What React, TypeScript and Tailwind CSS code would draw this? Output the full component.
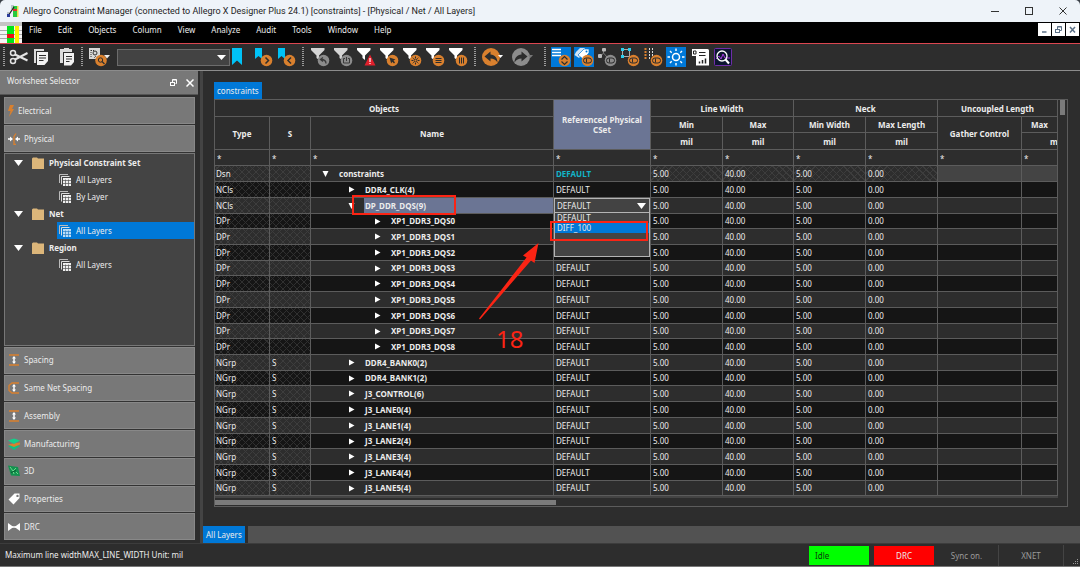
import React from "react";

const ORANGE = "#d9802e";

function Grip() {
  return (
    <svg width="2" height="20" viewBox="0 0 2 20" className="shrink-0" aria-hidden="true">
      <path d="M1 0V20" stroke="#9a9a9a" strokeWidth="2" strokeDasharray="1 1" />
    </svg>
  );
}

function Tool({ label, w = 20, active = false, children }: { label: string; w?: number; active?: boolean; children: React.ReactNode }) {
  return (
    <button type="button" aria-label={label} className={active ? "block shrink-0 bg-[#0078d7]" : "block shrink-0"}>
      <svg width={w} height="20" viewBox={`0 0 ${w} 20`} fill="none">
        {children}
      </svg>
    </button>
  );
}

function Funnel({ color = "#ffffff" }: { color?: string }) {
  return <path d="M1 1H14.5V3L9 8.5V13L6.5 11V8.5L1 3Z" fill={color} />;
}

function Dot({ color = ORANGE, children }: { color?: string; children?: React.ReactNode }) {
  return (
    <>
      <circle cx="13.5" cy="13.5" r="5.8" fill={color} />
      {children}
    </>
  );
}

function Toggle({ color = ORANGE, hole = "#2d2d2d" }: { color?: string; hole?: string }) {
  return (
    <Dot color={color}>
      <rect x="9.5" y="11" width="8" height="5" rx="2.5" stroke={hole} />
      <path d="M12.500 11.500V15.500" stroke={hole} />
    </Dot>
  );
}

function CurvedArrow({ color, flip = false }: { color: string; flip?: boolean }) {
  return (
    <g transform={flip ? "translate(20 0) scale(-1 1)" : undefined}>
      <circle cx="10" cy="10" r="9" fill={color} />
      <path d="M3.500 9.5L9.5 4.500V7.500C14 8 16.500 11 16.500 15.500C14.500 12.500 12.500 11.500 9.500 11.500V14.500Z" fill="#2d2d2d" />
    </g>
  );
}

function Toolbar() {
  return (
    <div role="toolbar" aria-label="Main toolbar" className="flex h-[27px] items-center border-b border-[#8c8c8c] bg-[#2d2d2d] pl-[3px]">
      <Grip />
      <div className="ml-1 flex gap-[2px]">
        <Tool label="Cut">
          <g stroke="#e4e4e4" strokeWidth="1.500">
            <circle cx="4" cy="6" r="2.500" />
            <circle cx="4" cy="14" r="2.500" />
            <path d="M6 7.500L18.500 13.500M6 12.500L18.500 6" strokeWidth="2" />
          </g>
        </Tool>
        <Tool label="Copy">
          <path d="M3 2H13V4H5V16H3Z" fill="#dcdcdc" />
          <path d="M6 5H17V14L13.500 18H6Z" fill="#f2f2f2" />
          <path d="M8 8.500H15M8 11H15M8 13.500H12.500" stroke="#2d2d2d" />
        </Tool>
      </div>
      <div className="ml-[6px] flex">
        <Tool label="Paste">
          <path d="M3 2H7V1H12V2H15V5H6V16H3Z" fill="#dcdcdc" />
          <path d="M7 6H17V15L14 18.500H7Z" fill="#f2f2f2" />
          <path d="M9 9.500H15M9 12H15M9 14.500H12.500" stroke="#2d2d2d" />
        </Tool>
      </div>
      <div className="ml-1 flex items-center gap-[6px]">
        <Grip />
        <Tool label="Find" w={22}>
          <rect x="0" y="1" width="11" height="11" fill="#d8d8d8" />
          <path d="M2 3V11M2 3.500H5M7 9L5 11" stroke="#333" strokeDasharray="1 1" />
          <circle cx="6" cy="6" r="2" stroke="#333" />
          <path d="M15 8H21L18 11.500Z" fill="#eee" />
          <circle cx="12" cy="13.500" r="5.800" fill={ORANGE} />
          <circle cx="11.500" cy="13" r="2.200" stroke="#2d2d2d" />
          <path d="M13 14.500L15.500 17" stroke="#2d2d2d" strokeWidth="1.300" />
        </Tool>
        <span className="relative block h-[17px] w-[113px]">
          <select aria-label="Search text" className="block h-full w-full appearance-none border border-[#6c6c6c] bg-[#434343]">
            <option aria-label="Empty" />
          </select>
          <svg width="9" height="5" viewBox="0 0 9 5" className="pointer-events-none absolute top-[6px] right-1" aria-hidden="true">
            <path d="M0 0H9L4.500 5Z" fill="#fff" />
          </svg>
        </span>
      </div>
      <div className="ml-px flex">
        <Tool label="Bookmark" w={12}>
          <path d="M1 1H11V18L6 13.500L1 18Z" fill="#00c3f7" />
        </Tool>
      </div>
      <div className="ml-[10px] flex gap-[3px]">
        <Tool label="Next bookmark">
          <path d="M2 1H9V12L5.500 9L2 12Z" fill="#00c3f7" />
          <Dot>
            <path d="M12.500 10.500L15.500 13.500L12.500 16.500" stroke="#2d2d2d" strokeWidth="1.500" />
          </Dot>
        </Tool>
        <Tool label="Previous bookmark">
          <path d="M2 1H9V12L5.500 9L2 12Z" fill="#00c3f7" />
          <Dot>
            <path d="M15 10.500L12 13.500L15 16.500" stroke="#2d2d2d" strokeWidth="1.500" />
          </Dot>
        </Tool>
      </div>
      <div className="ml-[6px] flex items-center gap-[6px]">
        <Grip />
        <div className="flex gap-[3px]">
          <Tool label="Undo filter">
            <Funnel color="#d4d4d4" />
            <Dot color="#8c8c8c">
              <path d="M13 10.500L10.500 12.500L13 14.500M11 12.500C14 12.500 16 13.500 16 16.500" stroke="#3a3a3a" strokeWidth="1.300" />
            </Dot>
          </Tool>
          <Tool label="Export filter">
            <Funnel color="#d4d4d4" />
            <Dot color="#8c8c8c">
              <path d="M12 11.500H10.500V16H16.500V11.500H15M13.500 14V10" stroke="#3a3a3a" />
            </Dot>
          </Tool>
          <Tool label="Filter errors">
            <Funnel />
            <path d="M14 7.500L19.500 18.500H8.500Z" fill="#e0202c" />
            <path d="M14 11V15M14 16V17" stroke="#fff" strokeWidth="1.200" />
          </Tool>
          <Tool label="Filter selection">
            <Funnel />
            <Dot>
              <path d="M10.500 10.500L16.500 12.500L14.500 13.500L16 15.500L15 16.500L13.200 14.700L12.200 16.500Z" fill="#2d2d2d" />
            </Dot>
          </Tool>
          <Tool label="Filter highlighted">
            <Funnel />
            <Dot>
              <circle cx="13.500" cy="13.500" r="1.500" stroke="#2d2d2d" />
              <path d="M13.500 9.500V11M13.500 16V17.500M9.500 13.500H11M16 13.500H17.500M10.700 10.700L11.700 11.700M15.300 15.300L16.300 16.300M10.700 16.300L11.700 15.300M15.300 11.700L16.300 10.700" stroke="#2d2d2d" />
            </Dot>
          </Tool>
          <Tool label="Filter rows">
            <Funnel />
            <Dot>
              <path d="M10.500 11.500H16.500M10.500 13.500H16.500M10.500 15.500H16.500" stroke="#2d2d2d" />
            </Dot>
          </Tool>
          <Tool label="Filter columns">
            <Funnel />
            <Dot>
              <path d="M11.500 10.500V16.500M13.500 10.500V16.500M15.500 10.500V16.500" stroke="#2d2d2d" />
            </Dot>
          </Tool>
        </div>
      </div>
      <div className="ml-[6px] flex items-center gap-[5px]">
        <Grip />
        <div className="flex gap-[6px]">
          <Tool label="Undo" w={24}>
            <CurvedArrow color={ORANGE} />
            <path d="M17 8H22L19.500 11Z" fill="#fff" />
          </Tool>
          <Tool label="Redo" w={24}>
            <CurvedArrow color="#8c8c8c" flip />
            <path d="M17 8H22L19.500 11Z" fill="#777" />
          </Tool>
        </div>
      </div>
      <div className="ml-[9px] flex items-center gap-[5px]">
        <Grip />
        <div className="flex gap-[3px]">
          <Tool label="Expand rows" active>
            <path d="M1 2.500H10M1 5.500H10M1 8.500H10" stroke="#fff" strokeWidth="1.500" />
            <Dot>
              <path d="M10.500 12.500L13.500 9.500L16.500 12.500M10.500 14.500L13.500 17.500L16.500 14.500" stroke="#2d2d2d" strokeWidth="1.200" />
            </Dot>
          </Tool>
          <Tool label="Show tags" active>
            <path d="M2 5L6 1H11V5L5 11L0.500 8Z" fill="#cfe4f7" />
            <path d="M4 8L10 2H15V6L9 12Z" fill="#fff" stroke="#0078d7" strokeWidth="0.700" />
            <circle cx="12.500" cy="4.500" r="1" fill="#0078d7" />
            <Toggle />
          </Tool>
          <Tool label="Show hierarchy">
            <path d="M6.500 3V6M3 10L6.500 6L10 10" stroke="#777" />
            <rect x="5" y="1" width="4" height="3.500" rx="1" fill="#bbb" />
            <rect x="1" y="7" width="4" height="4" rx="1" fill="#bbb" />
            <Toggle color="#8c8c8c" />
          </Tool>
          <Tool label="Show outline">
            <rect x="2.500" y="2.500" width="7" height="7" stroke="#aaa" />
            <g fill="#2ad0ef">
              <rect x="1" y="1" width="3" height="3" />
              <rect x="8" y="1" width="3" height="3" />
              <rect x="1" y="8" width="3" height="3" />
            </g>
            <Toggle />
          </Tool>
          <Tool label="Show columns">
            <path d="M2.500 1V12" stroke={ORANGE} strokeWidth="2" strokeDasharray="2 1" />
            <path d="M6.500 1V12M9.500 1V9" stroke="#ddd" strokeDasharray="2 1" />
            <Toggle />
          </Tool>
          <Tool label="Brightness" active>
            <circle cx="10" cy="10" r="3.500" stroke="#fff" strokeWidth="1.500" />
            <path d="M10 1.500V4M10 16V18.500M1.500 10H4M16 10H18.500M4 4L5.700 5.700M14.300 14.300L16 16M4 16L5.700 14.300M14.300 5.700L16 4" stroke="#fff" strokeWidth="1.400" />
          </Tool>
          <Tool label="Report" w={21}>
            <path d="M3 2H18.500A1.500 1.500 0 0 1 20 3.500V18.500H7V9H3Z" fill="#fff" />
            <path d="M4.500 4V7H7V4ZM10 5.500H16.500M10 8.500H16.500" stroke="#222" />
            <path d="M10.500 16.500V14.500M13.500 16.500V13M16.500 16.500V11.500" stroke="#222" strokeWidth="1.500" />
          </Tool>
          <Tool label="Analysis search" w={22}>
            <rect x="1.500" y="1.500" width="17" height="17" rx="1" fill="#0c1530" stroke="#6f2da8" />
            <path d="M3 12L6 9L8 12L10 7L12 11H17" stroke="#a33be0" />
            <circle cx="9" cy="9" r="5" stroke="#fff" strokeWidth="1.300" />
            <path d="M12.500 12.500L16 16.500" stroke="#fff" strokeWidth="2" />
          </Tool>
        </div>
      </div>
    </div>
  );
}

function TitleBar() {
  return (
    <header className="bg-[#3a4048]">
      <div className="flex h-[22px] items-center rounded-t-[5px] bg-[#eef3f9] pr-[13px] pl-[7px] text-[#1d1d1d]">
        <svg width="12" height="14" viewBox="0 0 12 14" aria-hidden="true">
          <path d="M4 1H7V5H4ZM0 8H2V11H0Z" fill="#bcc4cb" />
          <rect x="6" y="2" width="4" height="11" fill="#27c93f" />
          <rect x="6" y="5" width="4" height="2" fill="#e03030" />
          <rect x="10" y="2" width="1.500" height="11" fill="#e8e14a" />
          <path d="M1 12L7 3" stroke="#222" strokeWidth="1.300" />
          <rect x="0" y="10" width="3" height="3" fill="#2a3c9a" />
        </svg>
        <h1 className="ml-1 font-[Roboto,'Noto_Sans',sans-serif] text-[9px] leading-3">
          Allegro Constraint Manager (connected to Allegro X Designer Plus 24.1) [constraints] - [Physical / Net / All Layers]
        </h1>
        <div className="ml-auto flex gap-[26px]">
          <button type="button" aria-label="Minimize">
            <svg width="8" height="8" viewBox="0 0 8 8"><path d="M0 4.500H8" stroke="#333" /></svg>
          </button>
          <button type="button" aria-label="Maximize">
            <svg width="8" height="8" viewBox="0 0 8 8"><rect x="0.500" y="0.500" width="7" height="7" fill="none" stroke="#333" /></svg>
          </button>
          <button type="button" aria-label="Close">
            <svg width="8" height="8" viewBox="0 0 8 8"><path d="M0.500 0.500L7.500 7.500M7.500 0.500L0.500 7.500" stroke="#333" /></svg>
          </button>
        </div>
      </div>
    </header>
  );
}

const MENUS = ["File", "Edit", "Objects", "Column", "View", "Analyze", "Audit", "Tools", "Window", "Help"];

function MenuBar() {
  return (
    <nav aria-label="Menu" className="flex h-[22px] items-start border-b border-[#dc4650] bg-black">
      <svg width="22" height="21" viewBox="0 0 22 21" className="shrink-0" aria-hidden="true">
        <rect width="22" height="21" fill="#f4f4f4" />
        <rect width="22" height="4" fill="#c4c4c4" />
        <path d="M0 8.500H22M0 12.500H22M0 16.500H22" stroke="#aaa" />
        <rect x="7" y="4" width="7" height="17" fill="#00e51a" />
        <rect x="7" y="12" width="7" height="4" fill="#f01010" />
        <rect x="15" y="4" width="4" height="17" fill="#fff200" />
      </svg>
      <div className="ml-[7px] flex gap-4 pt-[2px]">
        {MENUS.map((m) => (
          <button type="button" key={m} className="leading-3">{m}</button>
        ))}
      </div>
      <div className="mt-px mr-px ml-auto flex gap-px">
        <button type="button" aria-label="Minimize worksheet" className="bg-white">
          <svg width="13" height="13" viewBox="0 0 13 13"><path d="M4 9H8.500" stroke="#5a6f86" strokeWidth="1.500" /></svg>
        </button>
        <button type="button" aria-label="Restore worksheet" className="bg-white">
          <svg width="13" height="13" viewBox="0 0 13 13" fill="none" stroke="#5a6f86">
            <path d="M5.500 6V3.500H9.500V7.500H8M5.500 4H9.500" />
            <rect x="3.500" y="6.500" width="4" height="3" />
          </svg>
        </button>
        <button type="button" aria-label="Close worksheet" className="bg-white">
          <svg width="13" height="13" viewBox="0 0 13 13"><path d="M4 4L9 9.500M9 4L4 9.500" stroke="#5a6f86" strokeWidth="1.500" /></svg>
        </button>
      </div>
    </nav>
  );
}

function SpacingIcon({ net = false }: { net?: boolean }) {
  return (
    <svg width="12" height="12" viewBox="0 0 12 12" fill="none">
      {net ? (
        <path d="M11 1H4L1 3.500V8.500L4 11H11" stroke={ORANGE} strokeWidth="1.300" />
      ) : (
        <path d="M1 1H11M1 11H11" stroke={ORANGE} strokeWidth="1.300" />
      )}
      <path d="M6 3V9" stroke="#fff" strokeWidth="1.500" />
      <path d="M6 2L8 4.500H4ZM6 10L8 7.500H4Z" fill="#fff" />
    </svg>
  );
}

const SECTIONS: { label: string; icon: React.ReactNode }[] = [
  { label: "Spacing", icon: <SpacingIcon /> },
  { label: "Same Net Spacing", icon: <SpacingIcon net /> },
  { label: "Assembly", icon: <SpacingIcon /> },
  {
    label: "Manufacturing",
    icon: (
      <svg width="12" height="12" viewBox="0 0 12 12">
        <path d="M0 8L6 6L12 8L6 12Z" fill="#10c080" />
        <path d="M0 6.500L5 5.500L12 4.500V6.500L6 9Z" fill={ORANGE} />
        <path d="M0 2.500L6 0.500L12 2.500L6 6Z" fill="#14cf8a" />
      </svg>
    ),
  },
  {
    label: "3D",
    icon: (
      <svg width="12" height="12" viewBox="0 0 12 12" fill="none">
        <path d="M0 0.500L10 2L12 11L3 10.500Z" fill="#12924f" />
        <path d="M2 2L5 6L8 3M5 6L6 9M8 7L10 9" stroke="#6cd98b" />
        <path d="M3 7.500L8 5.500" stroke="#0a5a33" />
      </svg>
    ),
  },
  {
    label: "Properties",
    icon: (
      <svg width="12" height="12" viewBox="0 0 12 12">
        <path fillRule="evenodd" d="M0.500 6.500L6.500 0.500H11.500V5L5.500 11.500ZM9.500 1.700A1.200 1.200 0 1 0 9.500 4.100A1.200 1.200 0 0 0 9.500 1.700Z" fill="#fff" />
      </svg>
    ),
  },
  {
    label: "DRC",
    icon: (
      <svg width="12" height="12" viewBox="0 0 12 12">
        <path d="M0 2L5.500 6L0 10ZM12 2L6.500 6L12 10Z" fill="#fff" />
        <path d="M4 6H8" stroke="#fff" strokeWidth="1.500" />
      </svg>
    ),
  },
];

function FolderRow({ label }: { label: string }) {
  return (
    <button type="button" className="flex h-[17px] w-full items-center pl-[9px] text-left font-bold">
      <svg width="9" height="6" viewBox="0 0 9 6" aria-hidden="true"><path d="M0 0H9L4.500 6Z" fill="#fff" /></svg>
      <svg width="12" height="12" viewBox="0 0 12 12" className="ml-[9px]" aria-hidden="true">
        <path d="M0 1.500L1 0.500H5L6 1.500H12V12H0Z" fill="#dcb67a" />
      </svg>
      <span className="ml-[5px]">{label}</span>
    </button>
  );
}

function SheetRow({ label, selected = false }: { label: string; selected?: boolean }) {
  return (
    <button type="button" className={`ml-[52px] flex h-[17px] items-center self-stretch pl-[2px] ${selected ? "bg-[#0078d7]" : ""}`}>
      <svg width="12" height="12" viewBox="0 0 12 12" fill="none" aria-hidden="true">
        <path d="M0.500 9V0.500H9" stroke="#bbb" />
        <path d="M2.500 10.500V2.500H10.500" stroke="#ddd" />
        <rect x="4" y="4" width="8" height="8" fill={selected ? "#b9dcf8" : "#f0f0f0"} />
        <path d="M6.500 5.500V12M9.500 5.500V12M4 6.500H12M4 9.500H12" stroke={selected ? "#2b7fc6" : "#555"} strokeWidth="0.700" />
      </svg>
      <span className="ml-[5px]">{label}</span>
    </button>
  );
}

function Sidebar() {
  const bar = "flex items-center border border-[#888] bg-[#787878] pl-[3px] text-left";
  return (
    <aside className="flex w-[203px] shrink-0 border-r-[3px] border-[#444]">
      <div className="flex w-[198px] flex-col">
        <div className="flex h-6 items-center border-b border-[#555] bg-[#787878] pr-1 pl-[7px]">
          <h2 className="-mt-1 flex-1">Worksheet Selector</h2>
          <button type="button" aria-label="Float panel">
            <svg width="8" height="8" viewBox="0 0 8 8" fill="none" stroke="#fff">
              <path d="M2.500 3V0.500H6.500V4.500H5.500M2.500 1H6.500" />
              <rect x="0.500" y="3.500" width="4" height="3" />
            </svg>
          </button>
          <button type="button" aria-label="Close panel" className="ml-2">
            <svg width="8" height="8" viewBox="0 0 8 8"><path d="M0.500 0.500L7.500 7.500M7.500 0.500L0.500 7.500" stroke="#fff" strokeWidth="1.500" /></svg>
          </button>
        </div>
        <div className="mt-[2px] mr-[3px] mb-[3px] ml-1 flex flex-1 flex-col gap-px bg-[#333]">
          <button type="button" className={`${bar} h-[27px]`}>
            <svg width="6" height="12" viewBox="0 0 6 12" aria-hidden="true"><path d="M2 0H6L4 4H6L1 12L2.500 6H0Z" fill={ORANGE} /></svg>
            <span className="ml-1">Electrical</span>
          </button>
          <button type="button" className={`${bar} h-[27px]`}>
            <svg width="12" height="12" viewBox="0 0 12 12" fill="none" aria-hidden="true">
              <path d="M8 0.500L6 3.500V11.500H8M6 3.500V7" stroke={ORANGE} strokeWidth="1.300" />
              <path d="M0 6H2M10 6H12" stroke="#fff" strokeWidth="1.500" />
              <path d="M2 3.500L5 6L2 8.500ZM10 3.500L7 6L10 8.500Z" fill="#fff" />
            </svg>
            <span className="ml-1">Physical</span>
          </button>
          <div className="flex flex-1 flex-col border border-[#777] bg-[#444]">
            <FolderRow label="Physical Constraint Set" />
            <SheetRow label="All Layers" />
            <SheetRow label="By Layer" />
            <FolderRow label="Net" />
            <SheetRow label="All Layers" selected />
            <FolderRow label="Region" />
            <SheetRow label="All Layers" />
          </div>
          <div className="flex h-[193px] flex-col gap-px">
            {SECTIONS.map((s) => (
              <button type="button" key={s.label} className={`${bar} flex-1`}>
                {s.icon}
                <span className="ml-1">{s.label}</span>
              </button>
            ))}
          </div>
        </div>
      </div>
    </aside>
  );
}

type Row = { type: string; s?: string; name: string; level: 0 | 1 | 2; open?: boolean };

const ROWS: Row[] = [
  { type: "Dsn", name: "constraints", level: 0, open: true },
  { type: "NCls", name: "DDR4_CLK(4)", level: 1 },
  { type: "NCls", name: "DP_DDR_DQS(9)", level: 1, open: true },
  ...[0, 1, 2, 3, 4, 5, 6, 7, 8].map((n): Row => ({ type: "DPr", name: `XP1_DDR3_DQS${n}`, level: 2 })),
  ...["DDR4_BANK0(2)", "DDR4_BANK1(2)", "J3_CONTROL(6)", "J3_LANE0(4)", "J3_LANE1(4)", "J3_LANE2(4)", "J3_LANE3(4)", "J3_LANE4(4)", "J3_LANE5(4)"].map(
    (name): Row => ({ type: "NGrp", s: "S", name, level: 1 }),
  ),
];

const INDENT = ["pl-[11px]", "pl-[37px]", "pl-[63px]"];
const HATCH_LIGHT =
  "bg-[repeating-linear-gradient(45deg,#3d3d3d_0_1px,transparent_1px_5px),repeating-linear-gradient(-45deg,#3d3d3d_0_1px,transparent_1px_5px)]";
const HATCH_DARK =
  "bg-[repeating-linear-gradient(45deg,#303030_0_1px,transparent_1px_5px),repeating-linear-gradient(-45deg,#303030_0_1px,transparent_1px_5px)]";
const SELECTED = 2;

function Callout() {
  return (
    <div className="pointer-events-none absolute top-[43px] right-3 z-20 h-[113px] w-[64px]">
      <svg width="64" height="80" viewBox="0 0 64 80" aria-hidden="true">
        <path d="M2 77.500L49.500 16.500L46 14.500L61.500 2L57.500 22L54 19.500L3 78.500Z" fill="#fb2414" />
      </svg>
      <span className="absolute bottom-0 left-[19px] text-[24px] leading-[30px] font-normal text-[#fb2414]">18</span>
    </div>
  );
}

function CsetEditor() {
  return (
    <>
      <select
        aria-label="Referenced Physical CSet"
        defaultValue="DEFAULT"
        className="absolute inset-0 h-[16px] w-full appearance-none border border-[#b4b4b4] bg-[#434343] pl-[2px] leading-3"
      >
        <option>DEFAULT</option>
      </select>
      <svg width="9" height="6" viewBox="0 0 9 6" className="pointer-events-none absolute top-[5px] right-1" aria-hidden="true">
        <path d="M0 0H9L4.500 6Z" fill="#fff" />
      </svg>
      <ul role="listbox" aria-label="Constraint sets" className="absolute top-[14px] right-0 left-0 z-10 h-[45px] border border-[#b4b4b4] bg-[#444]">
        <li role="option" aria-selected="false" className="h-[10px] pl-[2px] leading-[10px]">DEFAULT</li>
        <li role="option" aria-selected="true" className="h-[10px] bg-[#0078d7] pl-[2px] leading-[10px]">DIFF_100</li>
      </ul>
      <span className="pointer-events-none absolute top-[23px] right-[2px] -left-1 z-20 h-[20px] border-2 border-[#fb2414]" />
    </>
  );
}

function Grid() {
  const line = "border-r border-b border-[#5c5c5c]";
  const head = `${line} pt-px`;
  const values = ["5.00", "40.00", "5.00", "0.00"];
  const filters = ["Type", "S", "Name", "Referenced Physical CSet", "Line Width Min", "Line Width Max", "Neck Min Width", "Neck Max Length", "Gather Control", "Uncoupled Max"];
  return (
    <table className="w-full table-fixed border-separate border-spacing-0 text-left">
      <colgroup>
        <col className="w-[55px]" />
        <col className="w-[41px]" />
        <col />
        <col className="w-[97px]" />
        <col className="w-[72px]" />
        <col className="w-[71px]" />
        <col className="w-[72px]" />
        <col className="w-[72px]" />
        <col className="w-[84px]" />
        <col className="w-[36px]" />
      </colgroup>
      <thead className="text-center leading-3">
        <tr className="h-[17px]">
          <th colSpan={3} className={head}>Objects</th>
          <th rowSpan={3} className={`${head} bg-[#6b7594] leading-[10px]`}>Referenced Physical CSet</th>
          <th colSpan={2} className={head}>Line Width</th>
          <th colSpan={2} className={head}>Neck</th>
          <th colSpan={2} className={head}>Uncoupled Length</th>
        </tr>
        <tr className="h-4">
          <th rowSpan={2} className={head}>Type</th>
          <th rowSpan={2} className={head}>S</th>
          <th rowSpan={2} className={head}>Name</th>
          <th className={head}>Min</th>
          <th className={head}>Max</th>
          <th className={head}>Min Width</th>
          <th className={head}>Max Length</th>
          <th rowSpan={2} className={head}>Gather Control</th>
          <th className={head}>Max</th>
        </tr>
        <tr className="h-[17px]">
          <th className={head}>mil</th>
          <th className={head}>mil</th>
          <th className={head}>mil</th>
          <th className={head}>mil</th>
          <th className={`${head} overflow-hidden pl-[28px] text-left`}>mil</th>
        </tr>
        <tr className="h-4">
          {filters.map((f) => (
            <td key={f} className={line}>
              <input aria-label={`Filter ${f}`} defaultValue="*" className="block h-[15px] w-full bg-transparent pt-[2px] pl-[2px] leading-3" />
            </td>
          ))}
        </tr>
      </thead>
      <tbody className="leading-3">
        {ROWS.map((r, i) => {
          const dark = i % 2 === 1;
          const hatch = dark ? HATCH_DARK : HATCH_LIGHT;
          const height = i % 7 === 3 || i % 7 === 6 ? "h-[15px]" : "h-4";
          return (
            <tr key={r.name} className={`${height} ${dark ? "bg-[#151515]" : "bg-[#2d2d2d]"}`}>
              <td className={`${line} ${hatch} pl-px`}>{r.type}</td>
              <td className={`${line} ${hatch} pl-[2px]`}>{r.s}</td>
              <td className={`${line} ${INDENT[r.level]} relative font-bold`}>
                {i === SELECTED && <span className="absolute inset-y-0 right-0 left-[53px] bg-[#6b7594]" />}
                <span className="relative flex items-center">
                  <svg width="7" height="7" viewBox="0 0 7 7" className="mr-[10px]" aria-hidden="true">
                    <path d={r.open ? "M0.500 1H6.500L3.500 7Z" : "M1 0.500V6.500L6.500 3.500Z"} fill="#fff" />
                  </svg>
                  {r.name}
                </span>
                {i === SELECTED && (
                  <>
                    <span className="absolute -top-[3px] left-[41px] z-10 h-[20px] w-[104px] border-2 border-[#fb2414]" />
                    <Callout />
                  </>
                )}
              </td>
              <td className={`${line} relative pl-[2px] ${i === 0 ? "font-bold text-[#12b5c9]" : ""}`}>
                {i === SELECTED ? <CsetEditor /> : i === 3 || i === 4 || i === 5 ? null : "DEFAULT"}
              </td>
              {values.map((v, c) => (
                <td key={c} className={`${line} pl-[2px] ${i === 0 ? HATCH_LIGHT : ""}`}>{v}</td>
              ))}
              <td className={`${line} ${i === 0 ? "bg-[#444]" : ""}`} />
              <td className={`${line} ${i === 0 ? "bg-[#444]" : ""}`} />
            </tr>
          );
        })}
      </tbody>
    </table>
  );
}

function Worksheet() {
  return (
    <main className="flex min-w-0 flex-1 flex-col pt-[11px]">
      <div className="ml-[11px] flex">
        <button type="button" className="h-[17px] bg-[#0078d7] px-[3px] leading-3">constraints</button>
      </div>
      <div className="mr-3 ml-[11px] border border-[#5c5c5c]">
        <div className="flex">
          <div className="min-w-0 flex-1 border-b-2 border-[#444]">
            <Grid />
          </div>
          <div className="w-[9px] px-[2px]">
            <div className="h-[15px] bg-[#7b7b7b]" />
          </div>
        </div>
        <div className="flex h-2 items-center">
          <div className="h-[5px] w-[40%] bg-[#7b7b7b]" />
        </div>
      </div>
      <div className="mt-auto flex h-[17px] gap-[3px]">
        <button type="button" className="bg-[#0078d7] px-[3px] leading-3">All Layers</button>
        <div className="flex-1 bg-[#525252]" />
      </div>
    </main>
  );
}

function StatusBar() {
  return (
    <footer className="flex h-6 items-center border-t border-b border-t-[#3c3c3c] border-b-[#777] pl-[5px]">
      <p className="flex-1">Maximum line widthMAX_LINE_WIDTH Unit: mil</p>
      <span className="h-[19px] w-[60px] bg-[#00ff00] pl-[6px] leading-[19px] text-[#0c3a0c]">Idle</span>
      <span className="ml-[5px] h-[19px] w-[60px] bg-[#ff0000] text-center leading-[19px]">DRC</span>
      <span className="ml-px h-[21px] w-[64px] border-r border-[#444] text-center leading-[21px] text-[#9a9a9a]">Sync on.</span>
      <span className="h-[21px] w-[65px] border-r border-[#444] text-center leading-[21px] text-[#9a9a9a]">XNET</span>
      <svg width="16" height="21" viewBox="0 0 16 21" aria-hidden="true">
        <path d="M9 18.500H15M11 16.500H15M13 14.500H15" stroke="#999" strokeDasharray="1 1" />
      </svg>
    </footer>
  );
}

export default function App() {
  return (
    <div className="flex min-h-screen flex-col bg-[#2d2d2d] font-['Noto_Sans','Open_Sans',sans-serif] text-[8px] leading-3 text-[#ececec]">
      <TitleBar />
      <MenuBar />
      <Toolbar />
      <div className="flex flex-1">
        <Sidebar />
        <Worksheet />
      </div>
      <StatusBar />
    </div>
  );
}
